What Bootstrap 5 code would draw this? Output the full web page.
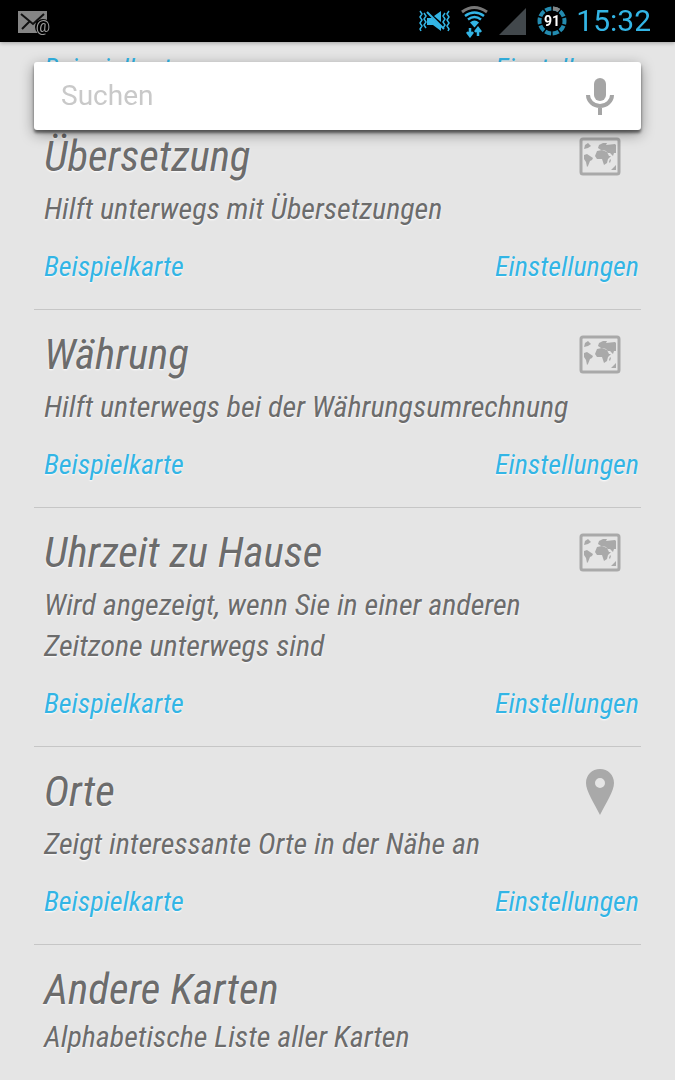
<!DOCTYPE html>
<html lang="de">
<head>
<meta charset="utf-8">
<meta name="viewport" content="width=device-width, initial-scale=1">
<title>Karten</title>
<link rel="stylesheet" href="https://cdn.jsdelivr.net/npm/bootstrap@5.3.0/dist/css/bootstrap.min.css">
<style>
body { background: #e5e5e5; color: #6c6c6c; font-family: "Roboto Condensed", Roboto, sans-serif; }
svg { display: block; flex-shrink: 0; }
.status-bar { height: 42px; background: #000; color: #33b5e5; font-family: Roboto, sans-serif; padding: 0 24px 0 17px; box-shadow: 0 1px 4px rgba(0,0,0,.3); z-index: 20; }
.clock { font-size: 30px; line-height: 42px; font-weight: 400; }
.search-box { top: 62px; left: 34px; right: 34px; height: 68px; background: #fff; border-radius: 3px; box-shadow: 0 3px 3px rgba(0,0,0,.5), 0 4px 14px rgba(0,0,0,.4); z-index: 10; padding: 0 16px 0 27px; }
.search-box input { font-family: Roboto, sans-serif; font-size: 28px; line-height: 42px; color: #555; background: none; padding: 0; }
.search-box input::placeholder { color: #c9c9c9; opacity: 1; }
.card-list { padding: 0 34px; margin-top: 42px; }
.entry { padding: 20px 2px 26px 10px; border-bottom: 1px solid #c6c6c6; font-style: italic; text-shadow: 0 1px 2px #fff; }
.entry-first { padding-top: 11px; }
.entry-last { border-bottom: 0; padding-bottom: 0; }
.entry h2 { font-size: 43px; line-height: 48px; font-weight: 400; margin: 0; }
.entry p { font-size: 30px; line-height: 41px; margin: 8px 48px 22px 0; }
.entry-last p { margin: 3px 0 0; }
.entry a { color: #33b5e5; font-size: 28px; line-height: 32px; text-decoration: none; }
.entry-icon { margin: 4px 17px 0 0; }
.pin-icon { margin-top: 2px; }
</style>
</head>
<body>
<svg width="0" height="0" class="position-absolute" aria-hidden="true">
  <symbol id="world" viewBox="0 0 44 40">
    <rect x="3" y="3" width="38" height="35" rx="2" fill="none" stroke="#a9a9a9" stroke-width="3"/>
    <path fill="#a9a9a9" d="M6 13l1-4 3-2 3 3-3 2zM6 19l3-1 6 4-1 2-2 1-2 5-1 1-1-5-2-3zM19 15l5-1 5 2 2 4 2 0-3 3-1 4-3 2-2-6-5 0-2-3zM20 12l1-3 4-2h4l-1 2 9-1 1 1v8l-2 0-1 3-3-3-2 0-2-2-3-1-2 0zM32 23l1 1-1 3-1-1zM33 34l5-5v5z"/>
  </symbol>
</svg>
<header class="status-bar fixed-top d-flex align-items-center justify-content-between">
  <svg width="40" height="36" viewBox="0 -5 40 36" role="img" aria-label="E-Mail">
    <rect x="1" y="3" width="29" height="22" fill="#858585"/>
    <path d="M4 6l12 10L27 6M5 21l8-8M19 13l4 4" fill="none" stroke="#111" stroke-width="2"/>
    <circle cx="26" cy="19" r="8" fill="#000"/>
    <text x="26" y="24" text-anchor="middle" font-size="16" fill="#999">@</text>
  </svg>
  <div class="d-flex align-items-center">
    <svg width="34" height="28" viewBox="0 0 34 28" fill="none" stroke="#33b5e5" stroke-width="2" role="img" aria-label="Vibration">
      <path d="M2 4l2 3-2 3 2 3-2 3 2 3-2 3 1 2M6 6l2 3-2 3 2 3-2 3 2 3M31 4l-2 3 2 3-2 3 2 3-2 3 2 3-1 2M27 6l-2 3 2 3-2 3 2 3-2 3" stroke-width="1.500"/>
      <path d="M9 11h5l9 8v5l-8-6H9zM16 9l7-5v11z" fill="#33b5e5" stroke="none"/>
      <path d="M9 5l17 17"/>
    </svg>
    <svg class="ms-2" width="30" height="34" viewBox="0 0 30 34" role="img" aria-label="WLAN">
      <path d="M2 8q12-9 25 0" fill="none" stroke="#777" stroke-width="3"/>
      <path d="M5 12q9.500-7 19 0M8 15.500q6.500-5 13 0" fill="none" stroke="#33b5e5" stroke-width="2.500"/>
      <path d="M10 18.500q4.500-4 9 0l-4.500 5z" fill="#33b5e5"/>
      <path d="M10 24v8M7 28l3 4 3-4M18 32v-8M15 28l3-4 3 4" fill="none" stroke="#33b5e5" stroke-width="2.500"/>
    </svg>
    <svg class="ms-2" width="30" height="28" viewBox="0 0 30 28" role="img" aria-label="Mobilfunk"><path d="M1 28L28 1v27z" fill="#42484c"/></svg>
    <svg class="ms-2" width="32" height="32" viewBox="0 0 32 32" role="img" aria-label="Akku 91 Prozent">
      <circle cx="16" cy="16" r="12.500" fill="none" stroke="#238bb0" stroke-width="4" pathLength="100" stroke-dasharray="8 2" transform="rotate(-86 16 16)"/>
      <path d="M17 3.500q4 0 6 2" stroke="#858585" stroke-width="4" fill="none"/>
      <text x="16" y="21" text-anchor="middle" font-size="14" font-weight="700" fill="#fff">91</text>
    </svg>
    <time class="clock ms-2">15:32</time>
  </div>
</header>

<form class="search-box position-fixed d-flex align-items-center">
  <input class="form-control border-0 shadow-none" type="text" placeholder="Suchen" aria-label="Suchen">
  <button class="btn p-0 border-0" type="button" aria-label="Spracheingabe">
    <svg width="50" height="40" viewBox="0 0 50 40"><rect x="19" y="2" width="12" height="23" rx="6" fill="#a5a5a5"/><path d="M13 19a12 11 0 0 0 24 0M25 30v9" fill="none" stroke="#a5a5a5" stroke-width="4"/></svg>
  </button>
</form>

<main class="card-list">
  <article class="entry entry-first"><div class="d-flex justify-content-between"><a href="#">Beispielkarte</a><a href="#">Einstellungen</a></div></article>
  <article class="entry">
    <div class="d-flex justify-content-between"><h2>Übersetzung</h2><svg class="entry-icon" width="44" height="40"><use href="#world"/></svg></div>
    <p>Hilft unterwegs mit Übersetzungen</p>
    <div class="d-flex justify-content-between"><a href="#">Beispielkarte</a><a href="#">Einstellungen</a></div>
  </article>
  <article class="entry">
    <div class="d-flex justify-content-between"><h2>Währung</h2><svg class="entry-icon" width="44" height="40"><use href="#world"/></svg></div>
    <p>Hilft unterwegs bei der Währungsumrechnung</p>
    <div class="d-flex justify-content-between"><a href="#">Beispielkarte</a><a href="#">Einstellungen</a></div>
  </article>
  <article class="entry">
    <div class="d-flex justify-content-between"><h2>Uhrzeit zu Hause</h2><svg class="entry-icon" width="44" height="40"><use href="#world"/></svg></div>
    <p>Wird angezeigt, wenn Sie in einer anderen Zeitzone unterwegs sind</p>
    <div class="d-flex justify-content-between"><a href="#">Beispielkarte</a><a href="#">Einstellungen</a></div>
  </article>
  <article class="entry">
    <div class="d-flex justify-content-between"><h2>Orte</h2><svg class="entry-icon pin-icon" width="44" height="46" viewBox="0 0 44 46"><path fill="#a9a9a9" fill-rule="evenodd" d="M22 0C14 0 8 6 8 14c0 8 8 20 14 32 6-12 14-24 14-32C36 6 30 0 22 0zm0 9a5 5 0 1 1 0 10 5 5 0 0 1 0-10z"/></svg></div>
    <p>Zeigt interessante Orte in der Nähe an</p>
    <div class="d-flex justify-content-between"><a href="#">Beispielkarte</a><a href="#">Einstellungen</a></div>
  </article>
  <article class="entry entry-last">
    <h2>Andere Karten</h2>
    <p>Alphabetische Liste aller Karten</p>
  </article>
</main>
<script src="https://cdn.jsdelivr.net/npm/bootstrap@5.3.0/dist/js/bootstrap.bundle.min.js"></script>
</body>
</html>
